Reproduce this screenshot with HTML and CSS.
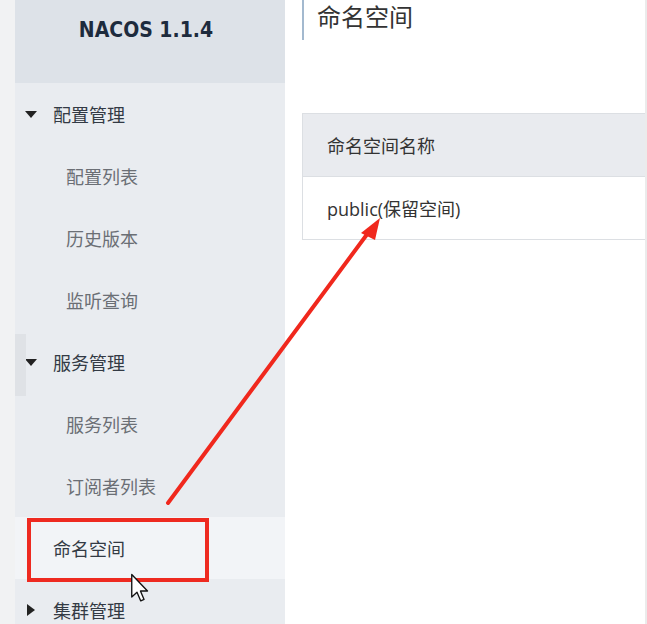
FILE: index.html
```html
<!DOCTYPE html>
<html lang="zh-CN">
<head>
<meta charset="utf-8">
<title>NACOS 命名空间</title>
<link rel="stylesheet" href="styles.css">
</head>
<body>
<div class="app">
  <div class="rail"></div>
  <aside class="sidebar">
    <div class="brand">NACOS 1.1.4</div>
    <div class="collapse-tab"></div>
    <ul class="nav">
      <li class="nav-group"><span class="caret down"></span>配置管理</li>
      <li class="nav-sub">配置列表</li>
      <li class="nav-sub">历史版本</li>
      <li class="nav-sub">监听查询</li>
      <li class="nav-group"><span class="caret down"></span>服务管理</li>
      <li class="nav-sub">服务列表</li>
      <li class="nav-sub">订阅者列表</li>
      <li class="nav-top active">命名空间</li>
      <li class="nav-group"><span class="caret right"></span>集群管理</li>
    </ul>
  </aside>
  <main class="main">
    <h1 class="page-title">命名空间</h1>
    <div class="table">
      <div class="thead">命名空间名称</div>
      <div class="trow">public(保留空间)</div>
    </div>
  </main>
  <div class="edge"></div>
</div>

<div class="highlight-box"></div>

<svg class="annot" width="647" height="624" viewBox="0 0 647 624">
  <line x1="168" y1="503" x2="368" y2="233" stroke="#f0281d" stroke-width="4" stroke-linecap="round"/>
  <polygon points="380,218 361,233 375,240" fill="#f0281d"/>
</svg>

<svg class="cursor" width="20" height="30" viewBox="0 0 13 20">
  <path d="M1 1 L1 16 L4.5 12.8 L7 18.6 L9.2 17.6 L6.8 12 L11.5 12 Z" fill="#ffffff" stroke="#111111" stroke-width="0.9" stroke-linejoin="round"/>
</svg>
</body>
</html>
```

FILE: styles.css
```css
html, body {
  margin: 0;
  padding: 0;
  background: #ffffff;
  width: 647px;
  height: 624px;
  overflow: hidden;
  font-family: "Open Sans", "Noto Sans CJK SC", sans-serif;
}

.app {
  display: flex;
  height: 624px;
}

.rail {
  width: 15px;
  flex: none;
  background: #f1f2f3;
}

.sidebar {
  width: 270px;
  flex: none;
  background: #e9ecf0;
  position: relative;
  overflow: hidden;
}

.brand {
  height: 83px;
  background: #dde2e8;
  display: flex;
  align-items: center;
  justify-content: center;
  padding-right: 8px;
  padding-bottom: 24px;
  box-sizing: border-box;
  font-family: "DejaVu Sans", sans-serif;
  font-stretch: condensed;
  font-weight: bold;
  font-size: 21px;
  color: #1d2b3d;
}

.collapse-tab {
  position: absolute;
  left: 0;
  top: 334px;
  width: 11px;
  height: 62px;
  background: #dfe2e6;
}

.nav {
  list-style: none;
  margin: 0;
  padding: 0;
}

.nav li {
  height: 62px;
  display: flex;
  align-items: center;
  font-family: "Noto Sans CJK SC", sans-serif;
  font-size: 18px;
  box-sizing: border-box;
}

.nav-group {
  color: #333a44;
  padding-left: 9px;
}

.nav-sub {
  color: #6b6f75;
  padding-left: 51px;
}

.nav-top {
  color: #333a44;
  padding-left: 38px;
}

.nav-top.active {
  background: #f2f4f7;
}

.caret {
  display: inline-block;
  width: 0;
  height: 0;
  margin-right: 16px;
}

.caret.down {
  border-left: 6px solid transparent;
  border-right: 6px solid transparent;
  border-top: 7px solid #222222;
  margin-left: 1px;
}

.caret.right {
  border-top: 6px solid transparent;
  border-bottom: 6px solid transparent;
  border-left: 8px solid #222222;
  margin-left: 3px;
  margin-right: 18px;
}

.main {
  flex: 1;
  padding-left: 17px;
  min-width: 0;
}

.page-title {
  margin: 0;
  height: 40px;
  border-left: 2px solid #a3b9cf;
  padding-left: 13px;
  padding-top: 1px;
  box-sizing: border-box;
  font-family: "Noto Sans CJK SC", sans-serif;
  font-weight: normal;
  font-size: 24px;
  line-height: 30px;
  color: #333333;
}

.table {
  margin-top: 73px;
  border: 1px solid #dcdfe3;
  border-right: none;
}

.thead {
  height: 62px;
  background: #e9ebef;
  border-bottom: 1px solid #dcdfe3;
  display: flex;
  align-items: center;
  padding-left: 24px;
  font-family: "Noto Sans CJK SC", sans-serif;
  font-size: 18px;
  color: #333333;
}

.trow {
  height: 62px;
  display: flex;
  align-items: center;
  padding-left: 24px;
  font-size: 18px;
  color: #333333;
}

.edge {
  width: 2px;
  flex: none;
  background: #ebebeb;
}

.highlight-box {
  position: absolute;
  left: 27px;
  top: 518px;
  width: 182px;
  height: 64px;
  box-sizing: border-box;
  border: 4px solid #ee2a20;
}

.annot {
  position: absolute;
  left: 0;
  top: 0;
  pointer-events: none;
}

.cursor {
  position: absolute;
  left: 130px;
  top: 573px;
}
```
